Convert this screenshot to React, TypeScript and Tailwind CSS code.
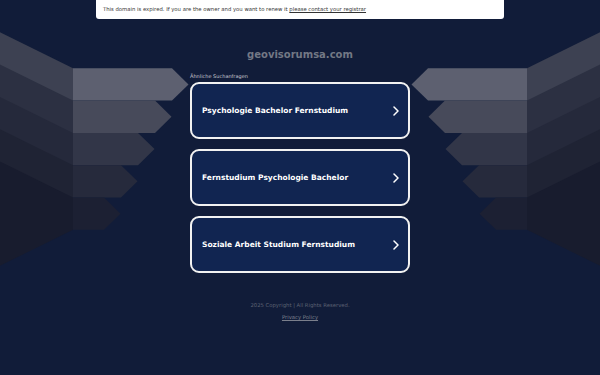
const searches = [
  "Psychologie Bachelor Fernstudium",
  "Fernstudium Psychologie Bachelor",
  "Soziale Arbeit Studium Fernstudium",
];

const rectColors = ["#5d6070", "#474a5a", "#323648", "#262a3c", "#1c2033"];
const sideColors = ["#3d4152", "#2c3042", "#25293b", "#1f2334", "#181c2e"];

// one side of the arrow fan, drawn for x in [0, 300]
const Fan = () => (
  <>
    {sideColors.map((c, i) => {
      const t = 68.3 + 32.3 * i;
      const b = t + 32.3;
      return <polygon key={"s" + i} points={`0,${t - 36} 73,${t} 73,${b} 0,${b + 36}`} fill={c} />;
    })}
    {rectColors.map((c, i) => {
      const t = 68.3 + 32.3 * i;
      const b = t + 32.3;
      const r = 172 - 17 * i;
      return (
        <polygon
          key={"r" + i}
          points={`73,${t} ${r},${t} ${r + 16.5},${(t + b) / 2} ${r},${b} 73,${b}`}
          fill={c}
        />
      );
    })}
  </>
);

const Chevron = () => (
  <svg width="6" height="10" viewBox="0 0 6 10" className="shrink-0">
    <polyline points="1,1 5,5 1,9" fill="none" stroke="#ffffff" strokeWidth="1.5" strokeLinecap="round" strokeLinejoin="round" />
  </svg>
);

export default function App() {
  return (
    <div
      className="relative h-[375px] w-full overflow-hidden bg-[#111c39]"
      style={{ fontFamily: '"DejaVu Sans", Verdana, sans-serif' }}
    >
      {/* background arrows */}
      <svg className="absolute inset-0" width="600" height="375" viewBox="0 0 600 375">
        <Fan />
        <g transform="matrix(-1 0 0 1 600 0)">
          <Fan />
        </g>
      </svg>

      <div className="relative flex flex-col items-center">
        {/* expired banner */}
        <div className="flex h-[19px] w-[408px] items-center rounded-b-[3px] bg-white px-[7px] text-[5.3px] text-[#333333]">
          <span>
            This domain is expired. If you are the owner and you want to renew it{" "}
            <a className="underline [text-decoration-skip-ink:none]">please contact your registrar</a>
          </span>
        </div>

        <h1 className="mt-[30px] text-[10px] font-bold leading-[12px] text-[#737885]">geovisorumsa.com</h1>

        <div className="mt-[12px] w-[220px]">
          <p className="text-[5px] leading-[6px] text-[#c9cbd3]">Ähnliche Suchanfragen</p>
          <div className="mt-[3px] flex flex-col gap-[10px]">
            {searches.map((s) => (
              <div
                key={s}
                className="flex h-[57px] items-center justify-between rounded-[9px] border-2 border-[#f2f2f2] bg-[#112551] pl-[10px] pr-[9px]"
              >
                <span className="text-[7.5px] font-bold text-white">{s}</span>
                <Chevron />
              </div>
            ))}
          </div>
        </div>

        <p className="mt-[29px] text-[5.3px] leading-[6px] text-[#5d6273]">2025 Copyright | All Rights Reserved.</p>
        <a className="mt-[6px] text-[5.3px] leading-[6px] text-[#7b7f8c] underline [text-decoration-skip-ink:none]">
          Privacy Policy
        </a>
      </div>
    </div>
  );
}
